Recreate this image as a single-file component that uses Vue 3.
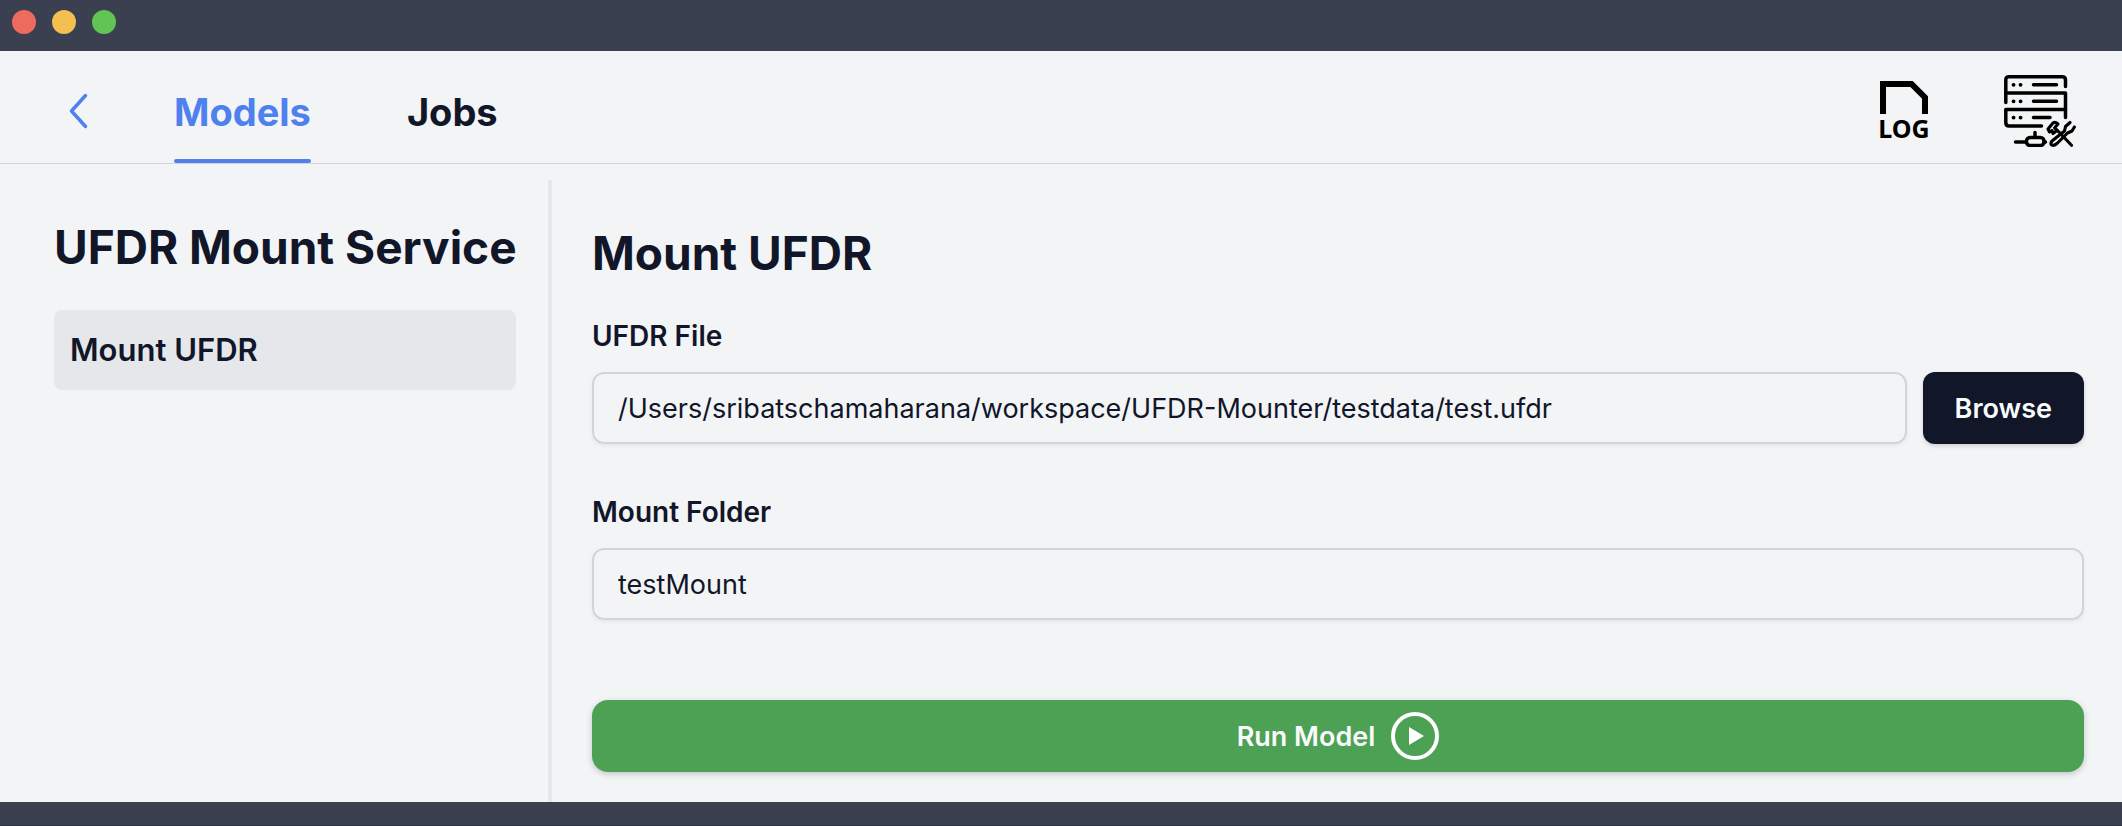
<script setup>
import { ref } from 'vue'

const tabs = ['Models', 'Jobs']
const activeTab = ref('Models')
const filePath = ref('/Users/sribatschamaharana/workspace/UFDR-Mounter/testdata/test.ufdr')
const mountFolder = ref('testMount')
</script>

<template>
  <div class="window">
    <div class="titlebar">
      <button class="dot close" aria-label="Close"></button>
      <button class="dot minimize" aria-label="Minimize"></button>
      <button class="dot maximize" aria-label="Maximize"></button>
    </div>

    <header class="topbar">
      <button class="back" aria-label="Back">
        <svg width="48" height="48" viewBox="0 0 48 48" fill="none" stroke="currentColor" stroke-width="3.500" stroke-linecap="round" stroke-linejoin="round">
          <path d="M31.500 8.500 17.500 24 31.500 39.500" />
        </svg>
      </button>
      <nav class="tabs">
        <a
          v-for="tab in tabs"
          :key="tab"
          href="#"
          class="tab"
          :class="{ active: tab === activeTab }"
          @click.prevent="activeTab = tab"
        >{{ tab }}</a>
      </nav>
      <div class="tools">
        <button class="tool" aria-label="Logs">
          <svg width="72" height="72" viewBox="0 0 72 72">
            <path d="M15 39V9H43.500L57 22.500V39" fill="none" stroke="#000" stroke-width="6" />
            <text x="36" y="62.500" text-anchor="middle" class="log-text">LOG</text>
          </svg>
        </button>
        <button class="tool" aria-label="Server settings">
          <svg width="72" height="72" viewBox="0 0 72 72" fill="none" stroke="#000" stroke-width="3.500" stroke-linecap="round" stroke-linejoin="round">
            <path d="M1.800 27.500V5Q1.800 1.800 5 1.800H58Q61.500 1.800 61.500 5V11.500" />
            <path d="M1.800 18H61.500V42.500" />
            <path d="M61.500 34.500H1.800V47.500Q1.800 51 5 51H37.500" />
            <path d="M29.500 9.800H52.500M29.500 26.300H52.500M29.500 42.600H46" />
            <path d="M9.500 9.800h.1M16.500 9.800h.1M9.500 26.300h.1M16.500 26.300h.1M9.500 42.600h.1M16.500 42.600h.1" stroke-width="3.800" />
            <path d="M31 57.500V62M11.500 67H22M40 67H41.500" />
            <rect x="22.500" y="62.500" width="17.500" height="8" rx="3.500" />
            <g stroke-width="3.100">
              <path d="M44 54 49 48Q51 46.500 54 49L50.500 53 53 55.500 49 58.500 48 55.500 45.500 57Z" />
              <path d="M53 55 67.500 70.300" />
              <path d="M66 47.500 61.500 51.500 60.500 56 48 66Q45.500 69.300 48.500 70.300Q50.500 70.600 53 68.500L63.500 58 68 56 70.400 52" />
            </g>
          </svg>
        </button>
      </div>
    </header>

    <div class="body">
      <aside class="sidebar">
        <h1>UFDR Mount Service</h1>
        <a href="#" class="item" @click.prevent>Mount UFDR</a>
      </aside>

      <main class="content">
        <h2>Mount UFDR</h2>
        <form @submit.prevent>
          <label for="file">UFDR File</label>
          <div class="row">
            <input id="file" v-model="filePath" type="text" spellcheck="false" />
            <button type="button" class="browse">Browse</button>
          </div>
          <label for="folder">Mount Folder</label>
          <div class="row">
            <input id="folder" v-model="mountFolder" type="text" spellcheck="false" />
          </div>
          <button type="submit" class="run">
            Run Model
            <svg width="48" height="48" viewBox="0 0 48 48">
              <circle cx="24" cy="24" r="22" fill="none" stroke="#fff" stroke-width="4" />
              <path d="M18 15 33 24 18 33Z" fill="#fff" />
            </svg>
          </button>
        </form>
      </main>
    </div>
    <footer class="bottombar"></footer>
  </div>
</template>

<style>
body {
  background: #f3f4f6;
}
</style>

<style scoped>
.window,
.window * {
  box-sizing: border-box;
}
.window {
  min-height: 100vh;
  display: flex;
  flex-direction: column;
  background: #f3f4f6;
  color: #111629;
  font-family: Inter, "Liberation Sans", sans-serif;
}
button {
  border: 0;
  padding: 0;
  background: none;
  font: inherit;
  cursor: pointer;
}
a {
  color: inherit;
  text-decoration: none;
}
svg {
  display: block;
}
.titlebar {
  display: flex;
  gap: 16px;
  height: 51px;
  padding: 10px 12px;
  background: #3a404f;
}
.dot {
  width: 24px;
  height: 24px;
  border-radius: 50%;
}
.close { background: #ed6a5e; }
.minimize { background: #f5bf4f; }
.maximize { background: #61c554; }
.topbar {
  display: flex;
  height: 113px;
  padding: 0 46px 0 54px;
  border-bottom: 1px solid #d1d5db;
}
.back {
  padding-top: 8px;
  margin-right: 72px;
  color: #4f81ee;
}
.tabs {
  display: flex;
  gap: 96px;
}
.tab {
  display: flex;
  align-items: center;
  padding-top: 14px;
  border-bottom: 4px solid transparent;
  font-size: 38px;
  line-height: 48px;
  font-weight: 700;
}
.tab.active {
  position: relative;
  color: #4f81ee;
}
.tab.active::after {
  content: "";
  position: absolute;
  inset: auto 0 -4px;
  height: 4px;
  border-radius: 2px;
  background: #4f81ee;
}
.tools {
  display: flex;
  align-items: center;
  gap: 64px;
  margin-left: auto;
  padding-top: 8px;
}
.log-text {
  font: 700 25px "Noto Sans", "Open Sans", sans-serif;
}
.body {
  flex: 1;
  display: flex;
  padding-top: 16px;
}
.sidebar {
  flex: none;
  width: 552px;
  padding: 34px 32px 0 54px;
  border-right: 4px solid #e2e8f0;
}
h1,
h2 {
  margin: 0;
  font-size: 46px;
  line-height: 66px;
  font-weight: 700;
  white-space: nowrap;
}
.item {
  display: block;
  margin-top: 30px;
  padding: 16px;
  border-radius: 8px;
  background: #e5e7eb;
  font-size: 31px;
  line-height: 48px;
  font-weight: 600;
}
.content {
  flex: 1;
  padding: 40px 38px 28px 40px;
}
form {
  display: flex;
  flex-direction: column;
  margin-top: 30px;
}
label {
  font-size: 28px;
  line-height: 40px;
  font-weight: 600;
}
.row {
  display: flex;
  gap: 16px;
  margin: 16px 0 48px;
}
input {
  flex: 1;
  min-width: 0;
  height: 72px;
  padding: 0 24px;
  border: 2px solid #d1d5db;
  border-radius: 12px;
  background: transparent;
  box-shadow: 0 2px 4px rgba(0, 0, 0, 0.05);
  color: inherit;
  font: inherit;
  font-size: 27px;
}
.browse {
  padding: 0 32px;
  border-radius: 12px;
  background: #111629;
  box-shadow: 0 2px 4px rgba(0, 0, 0, 0.15);
  color: #f8fafc;
  font-size: 27px;
  font-weight: 600;
}
.run {
  display: flex;
  align-items: center;
  justify-content: center;
  gap: 16px;
  height: 72px;
  margin-top: 32px;
  border-radius: 16px;
  background: #4da154;
  box-shadow: 0 2px 6px rgba(0, 0, 0, 0.2);
  color: #f8fafc;
  font-size: 27px;
  font-weight: 600;
}
.bottombar {
  height: 24px;
  border-bottom: 1px solid #2f3542;
  background: #3a404f;
}
</style>
